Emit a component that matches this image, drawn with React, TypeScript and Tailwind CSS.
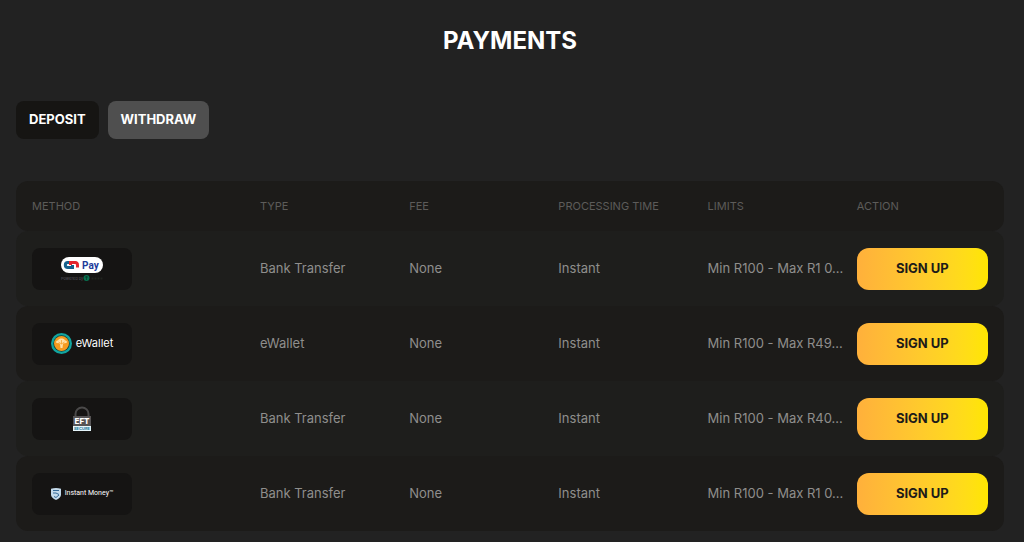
import { useState } from "react";

interface Payment {
  id: string;
  logo: React.ReactNode;
  type: string;
  fee: string;
  time: string;
  limits: string;
}

function PayLogo() {
  return (
    <svg width="44" height="25" viewBox="0 0 44 25" role="img" aria-label="Pay">
      <rect x="1" y="1" width="42" height="16" rx="8" fill="#fff" />
      <path d="M9.500 6.500H7.800a2.500 2.500 0 0 0 0 5h4.700V9" fill="none" stroke="#17618d" strokeWidth="3" />
      <path d="M10.500 9V6.500h4.700a2.500 2.500 0 0 1 2.300 2.500v2.500" fill="none" stroke="#e3262e" strokeWidth="3" />
      <text x="22" y="13" fontSize="10" fontWeight="700" fill="#1d3b9b" fontFamily="Roboto, sans-serif">Pay</text>
      <text x="1" y="24" fontSize="4" fill="#55545f" fontFamily="Inter, sans-serif">Powered by</text>
      <circle cx="26.500" cy="22" r="3" fill="#08704f" />
      <path d="M25 21h3M26.500 20v4" stroke="#043d2c" strokeWidth="0.800" />
      <path d="M31.500 22.500h11" stroke="#20231f" strokeWidth="2" strokeDasharray="2 1" />
    </svg>
  );
}

function EWalletLogo() {
  return (
    <span className="flex items-center gap-1">
      <svg width="21" height="21" viewBox="0 0 21 21" aria-hidden="true">
        <circle cx="10.500" cy="10.500" r="10.500" fill="#11a5a0" />
        <circle cx="10.500" cy="10.500" r="8.200" fill="#123f3b" />
        <circle cx="10.500" cy="10.500" r="7.500" fill="#f59b20" />
        <path
          d="M5 9.500c0-1.500 1-2 2-2 .5-1.500 2-2 3.500-2s3 .5 3.500 2c1 0 2 .5 2 2-1.500.8-2.700.5-4 1.200l-.5 4.300h-2L9 10.700c-1.300-.7-2.500-.4-4-1.200Z"
          fill="#ffe0a6"
        />
        <path d="m7.500 9 3 2 3-2M10.500 7v4" fill="none" stroke="#f59b20" strokeWidth="0.700" />
      </svg>
      <span className="text-[11px] text-white">eWallet</span>
    </span>
  );
}

function EftLogo() {
  return (
    <svg width="20" height="26" viewBox="0 0 20 26" role="img" aria-label="EFT Secure">
      <path d="M3.500 10V8a6.500 6.500 0 0 1 13 0v2" fill="none" stroke="#4a4949" strokeWidth="2" />
      <rect x="1" y="10" width="18" height="10" fill="#565455" />
      <rect x="1" y="20" width="18" height="5" fill="#e5f5fa" />
      <text x="10" y="18" fontSize="8" fontWeight="800" textAnchor="middle" fill="#fff" fontFamily="Inter, sans-serif">EFT</text>
      <text x="10" y="24" fontSize="4" fontWeight="700" textAnchor="middle" fill="#24789a" fontFamily="Inter, sans-serif">SECURE</text>
    </svg>
  );
}

function InstantMoneyLogo() {
  return (
    <span className="flex items-center gap-1">
      <svg width="10" height="12" viewBox="0 0 10 12" aria-hidden="true">
        <path d="M0 .8Q5-.6 10 .8V7q-.5 3-5 5Q.5 10 0 7Z" fill="#c3d9ea" />
        <path d="M2 2.500h6M2 5h3l3 1.500M3 8.500l2 1 3-2.500" fill="none" stroke="#245b8c" strokeWidth="0.900" />
      </svg>
      <span className="font-['Roboto',sans-serif] text-[7px] whitespace-nowrap text-white">
        Instant Money™
      </span>
    </span>
  );
}

const payments: Payment[] = [
  { id: "pay", logo: <PayLogo />, type: "Bank Transfer", fee: "None", time: "Instant", limits: "Min R100 - Max R1 0..." },
  { id: "ewallet", logo: <EWalletLogo />, type: "eWallet", fee: "None", time: "Instant", limits: "Min R100 - Max R49..." },
  { id: "eft", logo: <EftLogo />, type: "Bank Transfer", fee: "None", time: "Instant", limits: "Min R100 - Max R40..." },
  { id: "instant-money", logo: <InstantMoneyLogo />, type: "Bank Transfer", fee: "None", time: "Instant", limits: "Min R100 - Max R1 0..." },
];

const columns = ["METHOD", "TYPE", "FEE", "PROCESSING TIME", "LIMITS", "ACTION"];

const rowClass =
  "grid grid-cols-[minmax(0,8fr)_repeat(5,minmax(0,5fr))] items-center gap-x-[18px] rounded-xl px-4";

export default function App() {
  const [tab, setTab] = useState("deposit");

  function tabClass(name: string) {
    return tab === name ? "bg-[#161513]" : "bg-[#4f4f4f]";
  }

  return (
    <main className="min-h-screen bg-[#222222] pt-[25px] pr-5 pb-[10px] pl-4 font-['Inter','Liberation_Sans',sans-serif]">
      <h1 className="text-center text-2xl font-bold text-white">PAYMENTS</h1>

      <div className="mt-11 flex gap-[9px] text-[13px] font-bold text-white">
        <button
          onClick={() => setTab("deposit")}
          className={`h-[38px] rounded-lg px-[13px] ${tabClass("deposit")}`}
        >
          DEPOSIT
        </button>
        <button
          onClick={() => setTab("withdraw")}
          className={`h-[38px] rounded-lg px-[13px] ${tabClass("withdraw")}`}
        >
          WITHDRAW
        </button>
      </div>

      <table className="mt-[42px] block w-full text-left">
        <thead className="block">
          <tr className={`${rowClass} h-[50px] bg-[#1c1b19]`}>
            {columns.map((column) => (
              <th
                key={column}
                className="text-[11px] font-normal whitespace-nowrap text-[#5d5c5a]"
              >
                {column}
              </th>
            ))}
          </tr>
        </thead>
        <tbody className="block text-[13px] text-[#8f8e8c]">
          {payments.map((payment) => (
            <tr
              key={payment.id}
              className={`${rowClass} h-[75px] odd:bg-[#1e1e1c] even:bg-[#1c1b19]`}
            >
              <td>
                <div className="flex h-[42px] w-[100px] items-center justify-center rounded-lg bg-[#151413]">
                  {payment.logo}
                </div>
              </td>
              <td>{payment.type}</td>
              <td>{payment.fee}</td>
              <td>{payment.time}</td>
              <td className="whitespace-nowrap">{payment.limits}</td>
              <td>
                <button className="block h-[42px] w-full rounded-xl bg-linear-to-r from-[#ffb03b] to-[#ffe600] text-[13px] font-bold text-[#1c1b19]">
                  SIGN UP
                </button>
              </td>
            </tr>
          ))}
        </tbody>
      </table>
    </main>
  );
}
